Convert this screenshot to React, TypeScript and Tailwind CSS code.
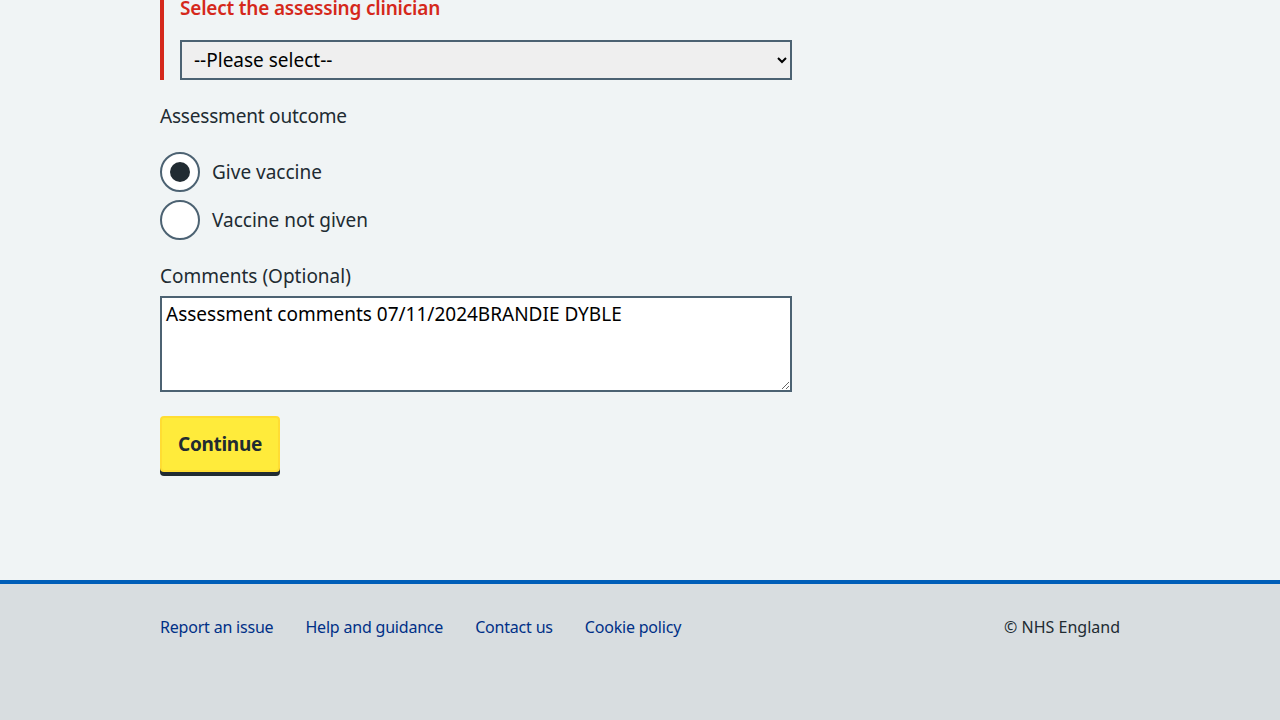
import React from "react";

const font = { fontFamily: '"Noto Sans", "Open Sans", Arial, sans-serif' };

const Radio = ({ label, checked }: { label: string; checked?: boolean }) => (
  <label className="flex items-center gap-3 h-10 cursor-pointer">
    <span className="w-10 h-10 rounded-full border-2 border-[#4c6272] bg-white flex items-center justify-center">
      {checked && <span className="w-5 h-5 rounded-full bg-[#212b32]" />}
    </span>
    <span className="text-[19px] text-[#212b32]">{label}</span>
  </label>
);

const App = () => {
  return (
    <div className="min-h-[720px] flex flex-col bg-[#f0f4f5]" style={font}>
      <main className="flex-1 px-[160px]">
        <div className="w-[632px]">
          <div className="border-l-4 border-[#d5281b] pl-4 -mt-[6px]">
            <p className="text-[19px] font-semibold text-[#d5281b] leading-[28px] tracking-[-0.2px]">
              Select the assessing clinician
            </p>
            <select className="mt-[18px] w-full h-10 border-2 border-[#4c6272] bg-[#efefef] px-2 text-[19px] text-black">
              <option>--Please select--</option>
            </select>
          </div>

          <p className="mt-[22px] text-[19px] text-[#212b32] leading-7 tracking-[-0.2px]">Assessment outcome</p>
          <div className="mt-[22px] flex flex-col gap-2">
            <Radio label="Give vaccine" checked />
            <Radio label="Vaccine not given" />
          </div>

          <p className="mt-[22px] text-[19px] text-[#212b32] leading-7">Comments (Optional)</p>
          <textarea
            className="mt-[6px] block w-full h-24 border-2 border-[#4c6272] bg-white px-1 py-0.5 text-[19px] text-black leading-7"
            defaultValue="Assessment comments 07/11/2024BRANDIE DYBLE"
          />

          <button className="mt-6 h-14 px-4 rounded bg-[#ffeb3b] border-2 border-[#ffdd33] shadow-[0_4px_0_#212b32] text-[19px] font-bold text-[#212b32] tracking-[-0.3px]">
            Continue
          </button>
        </div>
      </main>

      <footer className="h-[140px] border-t-4 border-[#005eb8] bg-[#d8dde0] px-[160px] pt-[31px]">
        <div className="flex items-center justify-between text-base">
          <ul className="flex gap-8">
            <li><a href="#" className="text-[#003087] tracking-[-0.2px]">Report an issue</a></li>
            <li><a href="#" className="text-[#003087] tracking-[-0.2px]">Help and guidance</a></li>
            <li><a href="#" className="text-[#003087] tracking-[-0.2px]">Contact us</a></li>
            <li><a href="#" className="text-[#003087] tracking-[-0.2px]">Cookie policy</a></li>
          </ul>
          <p className="text-[#212b32]">© NHS England</p>
        </div>
      </footer>
    </div>
  );
};

export default App;
